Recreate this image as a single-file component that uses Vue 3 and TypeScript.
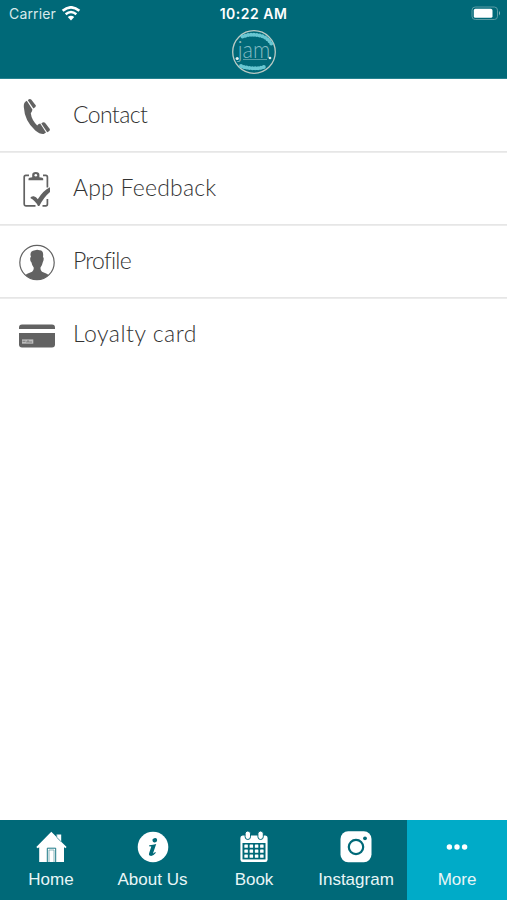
<script setup lang="ts">
interface MenuItem {
  id: string
  label: string
}

const menu: MenuItem[] = [
  { id: 'contact', label: 'Contact' },
  { id: 'feedback', label: 'App Feedback' },
  { id: 'profile', label: 'Profile' },
  { id: 'loyalty', label: 'Loyalty card' },
]

const tabs: MenuItem[] = [
  { id: 'home', label: 'Home' },
  { id: 'about', label: 'About Us' },
  { id: 'book', label: 'Book' },
  { id: 'instagram', label: 'Instagram' },
  { id: 'more', label: 'More' },
]

const activeTab = 'more'
</script>

<template>
  <div class="screen">
    <header class="header">
      <div class="status">
        <div class="carrier">
          <span>Carrier</span>
          <svg class="wifi" width="20" height="15" viewBox="0 0 18 14">
            <path d="M1.2 4.5Q9-2 16.8 4.5" fill="none" stroke="#fff" stroke-width="2.5" />
            <path d="M4 7.7Q9 3.6 14 7.7" fill="none" stroke="#fff" stroke-width="2.3" />
            <path d="M6 10.2Q9 7.8 12 10.2L9 13.5Z" fill="#fff" />
          </svg>
        </div>
        <span class="time">10:22 AM</span>
        <div class="power">
          <svg width="30" height="15" viewBox="0 0 30 15">
            <rect x="1" y="1" width="25.5" height="12.5" rx="3.2" fill="none" stroke="#5b9ca5" />
            <rect x="2.8" y="2.8" width="18.7" height="9" rx="1.6" fill="#fff" />
            <path d="M28 5q2 2.2 0 4.4z" fill="#8bbcc2" />
          </svg>
        </div>
      </div>
      <svg class="logo" width="46" height="46" viewBox="0 0 46 46">
        <circle cx="23" cy="23" r="21.3" fill="none" stroke="#bccbc5" stroke-width="1.3" />
        <path d="M11.5 7.5Q23 3.5 33 8Q38 10.5 40.5 15" fill="none" stroke="#68c7d2" stroke-width="4" stroke-linecap="round" stroke-dasharray="0 2.9" />
        <path d="M10 37Q22 41.5 35 37.5" fill="none" stroke="#68c7d2" stroke-width="4" stroke-linecap="round" stroke-dasharray="0 2.9" />
        <text x="6.7" y="28.5" textLength="32.5" lengthAdjust="spacingAndGlyphs" class="wordmark">jam</text>
        <circle cx="6.2" cy="29.5" r="1.6" fill="#e4f3f3" />
        <circle cx="39" cy="29" r="1.3" fill="#e4f3f3" />
        <path d="M12 30.5H36" stroke="#6ba9b0" stroke-width=".8" />
      </svg>
    </header>

    <main class="menu">
      <button v-for="item in menu" :key="item.id" class="row" type="button">
        <svg class="row-icon" width="40" height="40" viewBox="0 0 40 40">
          <g v-if="item.id === 'contact'" fill="#626262">
            <path d="M9.8 4.8Q6.4 6.2 6.8 11Q7.6 25 18.3 34.5Q23 38.4 26.7 38L29 36.4L23.2 27.6Q21 28.2 20.2 29.4Q14.6 24 13.8 17.3Q15.4 15.3 15.4 13.5Z" />
            <path d="M10.8 4.2Q12.6 2.2 14.2 3.5L18.9 9.6Q19.2 11.3 16.4 12.5Z" />
            <path d="M24.3 27.6Q26.4 25.6 28 26.8L32.8 33Q33.5 34.7 30.2 36.3Z" />
          </g>
          <g v-else-if="item.id === 'feedback'">
            <path d="M12 6.3H8.8Q7.2 6.3 7.2 8V35.2Q7.2 36.8 8.8 36.8H18.5M26 6.3H28.8Q30.4 6.3 30.4 8V18.5M30.4 30V35Q30.4 36.8 28.8 36.8H25.5" fill="none" stroke="#626262" stroke-width="1.7" />
            <path d="M11.5 11.2V9.8Q11.5 8.2 15.2 8.2V5.8Q15.2 3 18.8 3T22.4 5.8V8.2Q26.2 8.2 26.2 9.8V11.2Z" fill="#626262" />
            <circle cx="18.8" cy="6.2" r="1.3" fill="#fff" />
            <path d="M13.3 29Q14 27 16.8 27.3Q19.2 27.8 20.8 30.2Q26 21.5 33 18.2V23Q27 28 22.3 37H21Q18.5 31.8 13.3 29Z" fill="#626262" />
          </g>
          <g v-else-if="item.id === 'profile'">
            <circle cx="20" cy="20.5" r="17.2" fill="#fff" stroke="#626262" stroke-width="1.2" />
            <path d="M8.2 33Q10 31.5 15.1 29.8Q17 28.8 16.7 25.4Q15 23.8 14.5 20.5Q12.8 19.5 13.3 15.5L14 15Q11.9 9 18 8.2Q20 7.2 22.5 8.2Q27 8 26 15Q27.6 16 25.7 20.5Q25.2 23.6 23.5 25.4Q23.2 28.9 25 29.8Q30 31.5 31.8 33Q27 37.8 20 37.8T8.2 33Z" fill="#626262" />
          </g>
          <g v-else>
            <path d="M2 14V12.8Q2 9.5 5 9.5H35Q38 9.5 38 12.8V14ZM2 18H38V29.5Q38 32.5 35 32.5H5Q2 32.5 2 29.5Z" fill="#626262" />
            <rect x="5" y="24.4" width="11.3" height="4.3" fill="#bdbdbd" />
            <path d="M5.5 26.3H8.5M10 27.8V26H12V27.8M14 28V26" fill="none" stroke="#626262" stroke-width=".7" />
          </g>
        </svg>
        <span class="row-label" :class="item.id">{{ item.label }}</span>
      </button>
    </main>

    <nav class="tabs">
      <button v-for="tab in tabs" :key="tab.id" class="tab" :class="{ active: tab.id === activeTab }" type="button">
        <svg width="34" height="34" viewBox="0 0 34 34">
          <g v-if="tab.id === 'home'">
            <path d="M2.3 17L17.3 1.8L22.3 6.7V4.5H27.2V11.8L32.6 17L31.3 18.2L30 17V32H5.2V17.2L3.7 18.3Z" fill="#fff" />
            <path d="M13.3 32V18.2H21.7V32" fill="none" stroke="#006978" stroke-width=".9" />
            <path d="M15 32V20H20V32" fill="none" stroke="#5999a2" stroke-width=".7" />
            <path d="M22.7 4.5V7.3L26.8 11.4" fill="none" stroke="#006978" stroke-width=".7" />
          </g>
          <g v-else-if="tab.id === 'about'">
            <circle cx="17" cy="17" r="15.3" fill="#fff" />
            <ellipse cx="18.8" cy="10.3" rx="2.4" ry="2.1" transform="rotate(-20 18.8 10.3)" fill="#006978" />
            <path d="M13.3 15.2Q17.2 14.9 20.2 14L17.3 22.6Q16.7 24.7 19.1 22.1L19.9 22.7Q17 26.4 14.4 25.8Q12.4 25.3 13.2 22.9L15.3 16.6L13 16.2Z" fill="#006978" />
          </g>
          <g v-else-if="tab.id === 'book'">
            <path d="M5.6 5.5H28.4Q30.6 5.5 30.6 8V29.5Q30.6 32 28.2 32H5.8Q3.4 32 3.4 29.5V8Q3.4 5.5 5.6 5.5Z" fill="#fff" />
            <rect x="5.5" y="13" width="23" height="16.4" fill="#006978" />
            <g fill="#fff">
              <template v-for="r in 3" :key="r">
                <rect v-for="c in 4" :key="c" :x="2.1 + c * 5.25" :y="9.4 + r * 5" width="3.5" height="3.3" rx=".5" />
              </template>
              <rect x="8.1" y="1" width="5.4" height="8.5" rx="2.7" stroke="#006978" stroke-width="1" />
              <rect x="20.9" y="1" width="5.4" height="8.5" rx="2.7" stroke="#006978" stroke-width="1" />
            </g>
          </g>
          <g v-else-if="tab.id === 'instagram'">
            <rect x="1.5" y="1.3" width="31" height="31" rx="7.7" fill="#fff" />
            <circle cx="17" cy="17" r="7.2" fill="none" stroke="#006978" stroke-width="2.2" />
            <circle cx="26" cy="8.3" r="1.9" fill="#006978" />
          </g>
          <g v-else fill="#fff">
            <circle cx="9.4" cy="17" r="2.7" />
            <circle cx="17" cy="17" r="2.7" />
            <circle cx="24.6" cy="17" r="2.7" />
          </g>
        </svg>
        <span class="tab-label">{{ tab.label }}</span>
      </button>
    </nav>
  </div>
</template>

<style>
body {
  margin: 0;
  background: #fff;
}
</style>

<style scoped>
.screen {
  display: flex;
  flex-direction: column;
  height: 900px;
  background: #fff;
}
.screen * {
  box-sizing: border-box;
}
.header {
  height: 79px;
  background: #006978;
  border-bottom: 1px solid #278290;
  display: flex;
  flex-direction: column;
  align-items: center;
  flex: none;
}
.status {
  width: 100%;
  height: 28px;
  display: grid;
  grid-template-columns: 1fr auto 1fr;
  align-items: center;
  color: #fff;
  font-family: Inter, "Liberation Sans", sans-serif;
  font-size: 14px;
  line-height: 28px;
  flex: none;
}
.carrier {
  padding-left: 9px;
  display: flex;
  align-items: center;
  gap: 5px;
  color: #d8e9eb;
  letter-spacing: 0.15px;
}
.wifi {
  margin-top: -2px;
}
.time {
  font-weight: 600;
  letter-spacing: 0.5px;
}
.power {
  display: flex;
  justify-content: flex-end;
  padding-right: 6px;
  margin-top: -1px;
}
.logo {
  margin-top: 1px;
}
.wordmark {
  font-family: Lato, "Liberation Sans", sans-serif;
  font-weight: 300;
  font-size: 24px;
  fill: #84bcc3;
}
.menu {
  flex: 1;
}
button {
  appearance: none;
  border: 0;
  margin: 0;
  padding: 0;
  background: none;
}
.row {
  width: 100%;
  height: 73px;
  padding: 1px 17px 0;
  display: flex;
  align-items: center;
  gap: 16px;
  box-shadow: inset 0 -1px #e6e6e6, 0 1px #ececec;
}
.row:last-child {
  box-shadow: none;
}
.row-icon {
  flex: none;
}
.row-label {
  font-family: Lato, "Open Sans", sans-serif;
  font-weight: 300;
  font-size: 23px;
  line-height: 30px;
  color: #333;
  white-space: nowrap;
  padding-bottom: 4px;
}
.row-label.contact {
  letter-spacing: -0.6px;
}
.row-label.feedback {
  letter-spacing: 0.22px;
}
.row-label.profile {
  letter-spacing: -0.75px;
}
.row-label.loyalty {
  letter-spacing: 0.5px;
}
.tabs {
  height: 80px;
  flex: none;
  display: grid;
  grid-template-columns: 102px 101px 102px 102px 1fr;
  background: #006978;
}
.tab {
  display: flex;
  flex-direction: column;
  align-items: center;
  padding-top: 10px;
  color: #fff;
}
.tab.active {
  background: #00abc8;
}
.tab-label {
  margin-top: 4px;
  font-family: "Liberation Sans", Arial, sans-serif;
  font-size: 17px;
  line-height: 23px;
  color: #e9f6f7;
}
</style>
